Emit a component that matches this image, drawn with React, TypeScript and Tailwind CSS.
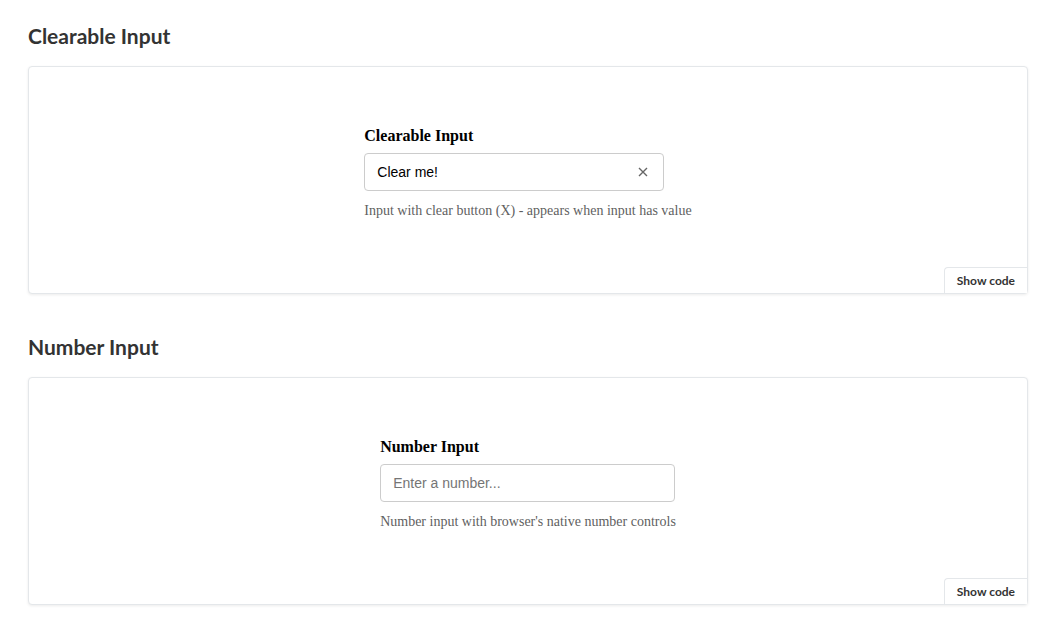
import { useState } from 'react';

function Story({ title, children }: { title: string; children: React.ReactNode }) {
  return (
    <section>
      <h2 className="mt-6 text-[21px] leading-6 font-bold text-[#333333] [font-family:Lato,sans-serif]">
        {title}
      </h2>
      <div className="relative mt-[18px] h-[228px] w-[1000px] rounded-[4px] border border-[#e4e7ea] bg-white shadow-[0_1px_3px_0_rgba(0,0,0,0.08)]">
        <div className="flex justify-center pt-[59px]">{children}</div>
        <button className="absolute bottom-0 right-0 h-[26px] rounded-tl-[4px] border-l border-t border-[#e4e7ea] bg-white px-3 text-[12px] font-bold text-[#333333] [font-family:Lato,sans-serif]">
          Show code
        </button>
      </div>
    </section>
  );
}

function ClearableInput() {
  const [value, setValue] = useState('Clear me!');
  return (
    <div className="flex flex-col [font-family:'Liberation_Serif',serif]">
      <label className="mb-[7px] text-[16px] leading-5 font-bold text-black">Clearable Input</label>
      <div className="relative w-[300px]">
        <input
          value={value}
          onChange={(e) => setValue(e.target.value)}
          className="h-[38px] w-full rounded-[4px] border border-[#cccccc] pl-3 pr-9 text-[14px] text-black outline-none [font-family:'Liberation_Sans',sans-serif]"
        />
        {value && (
          <button
            onClick={() => setValue('')}
            className="absolute right-[9px] top-1/2 flex h-6 w-6 -translate-y-1/2 items-center justify-center text-[#666666]"
          >
            <svg width="10" height="10" viewBox="0 0 10 10" fill="none" stroke="currentColor" strokeWidth={1.4}>
              <path d="M1 1l8 8M9 1l-8 8" />
            </svg>
          </button>
        )}
      </div>
      <p className="mt-[10px] text-[14px] leading-5 text-[#5f5f5f]">
        Input with clear button (X) - appears when input has value
      </p>
    </div>
  );
}

function NumberInput() {
  return (
    <div className="flex flex-col [font-family:'Liberation_Serif',serif]">
      <label className="mb-[7px] text-[16px] leading-5 font-bold text-black">Number Input</label>
      <input
        type="number"
        placeholder="Enter a number..."
        className="h-[38px] w-[295px] rounded-[4px] border border-[#cccccc] px-3 text-[14px] text-black outline-none placeholder:text-[#757575] [font-family:'Liberation_Sans',sans-serif]"
      />
      <p className="mt-[10px] text-[14px] leading-5 text-[#5f5f5f]">
        Number input with browser's native number controls
      </p>
    </div>
  );
}

export default function App() {
  return (
    <div className="min-h-[642px] bg-white pl-7">
      <Story title="Clearable Input">
        <ClearableInput />
      </Story>
      <div className="h-[17px]" />
      <Story title="Number Input">
        <NumberInput />
      </Story>
    </div>
  );
}
